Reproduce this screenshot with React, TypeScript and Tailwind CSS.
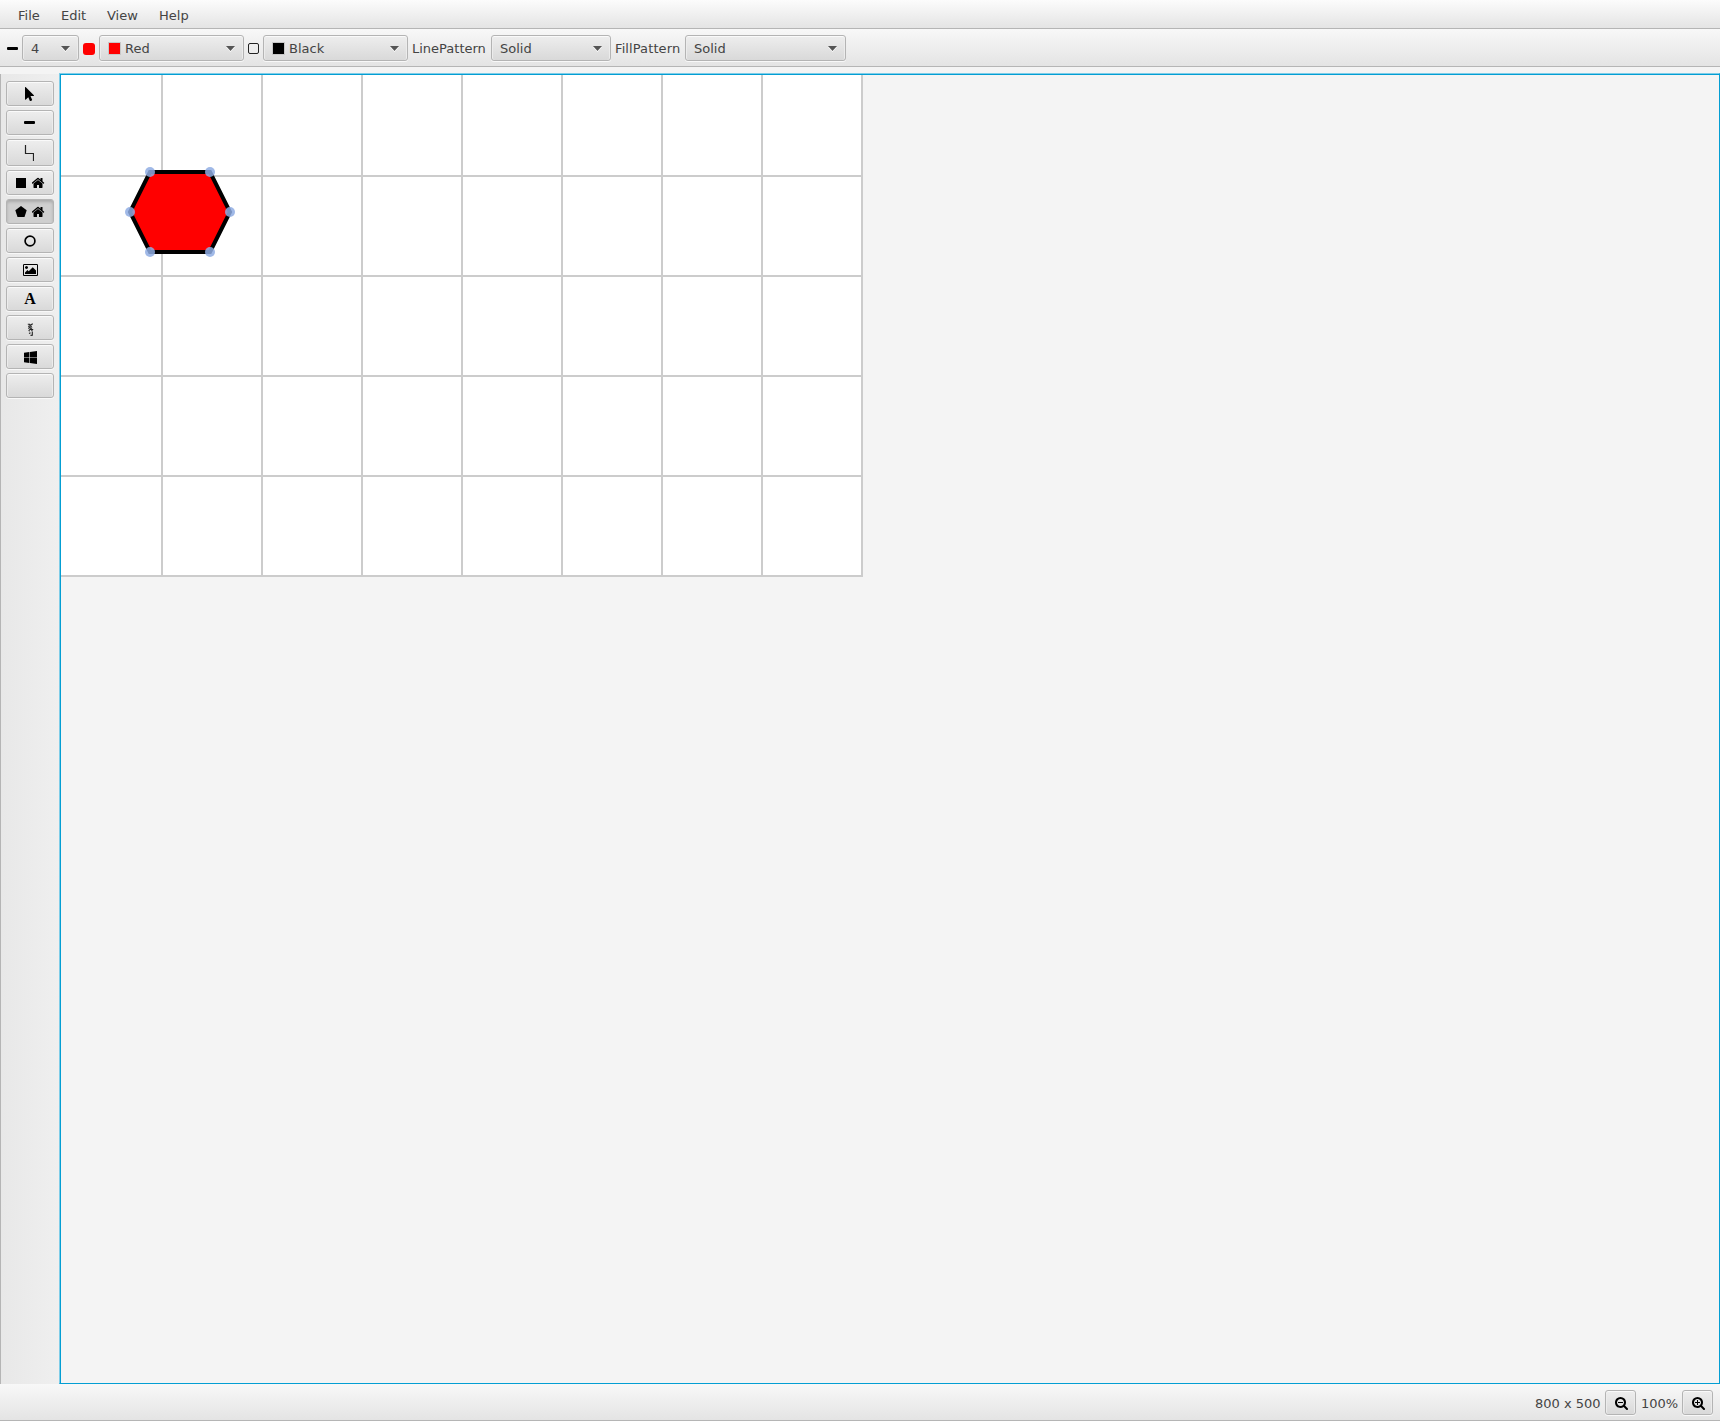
import type { ReactNode } from 'react';

const BUTTON =
  'box-border flex items-center justify-center rounded-[3px] border border-[#b4b4b4] bg-gradient-to-b from-[#eeeeee] to-[#d9d9d9] shadow-[inset_0_1px_0_#fafafa,inset_1px_0_0_#ececec,inset_-1px_0_0_#ececec,0_1px_0_#f8f8f8]';
const PRESSED =
  'box-border flex items-center justify-center rounded-[3px] border border-[#b4b4b4] bg-[#cfcfcf] shadow-[inset_0_2px_3px_#aaaaaa,0_1px_0_#f8f8f8]';

function Glyph({ box, d, className }: { box: string; d: string; className: string }) {
  return (
    <svg viewBox={box} className={className} fill="black">
      <path d={d} />
    </svg>
  );
}

const HOME =
  'M1408 992v480q0 26-19 45t-45 19h-384v-384h-256v384h-384q-26 0-45-19t-19-45v-480q0-1 .5-3t.5-3l575-474 575 474q1 2 1 6zm223-69l-62 74q-8 9-21 11h-3q-13 0-21-7l-692-577-692 577q-12 8-24 7-13-2-21-11l-62-74q-8-10-7-23.5t11-21.5l719-599q32-26 76-26t76 26l244 204v-195q0-14 9-23t23-9h192q14 0 23 9t9 23v408l219 182q10 8 11 21.5t-7 23.5z';
const PICTURE =
  'M640 576q0 80-56 136t-136 56-136-56-56-136 56-136 136-56 136 56 56 136zm1024 384v448h-1408v-192l320-320 160 160 512-512zm96-704h-1600q-13 0-22.5 9.5t-9.5 22.5v1216q0 13 9.5 22.5t22.5 9.5h1600q13 0 22.5-9.5t9.5-22.5v-1216q0-13-9.5-22.5t-22.5-9.5zm160 32v1216q0 66-47 113t-113 47h-1600q-66 0-113-47t-47-113v-1216q0-66 47-113t113-47h1600q66 0 113 47t47 113z';
const WINDOWS =
  'M746 1006v651l-682-94v-557h682zm0-743v659h-682v-565zm982 743v786l-907-125v-661h907zm0-878v794h-907v-669z';
const POINTER =
  'M1133 1043q31 30 14 69-17 40-59 40H706l201 476q10 25 0 49t-34 35l-177 75q-25 10-49 0t-35-34l-191-452-312 312q-19 19-45 19-12 0-24-5-40-17-40-59V64Q0 22 40 5 52 0 64 0q27 0 45 19z';
const LENS =
  'm128 32q0-185-131.5-316.5t-316.5-131.5-316.5 131.5-131.5 316.5 131.5 316.5 316.5 131.5 316.5-131.5 131.5-316.5zm512 832q0 53-37.5 90.5t-90.5 37.5q-54 0-90-38l-343-342q-179 124-399 124-143 0-273.5-55.5t-225-150-150-225-55.5-273.5 55.5-273.5 150-225 225-150 273.5-55.5 273.5 55.5 225 150 150 225 55.5 273.5q0 220-124 399l343 343q37 37 37 90z';
const ZOOM_OUT =
  'M1088 800v64q0 13-9.5 22.5t-22.5 9.5h-576q-13 0-22.5-9.5t-9.5-22.5v-64q0-13 9.5-22.5t22.5-9.5h576q13 0 22.5 9.5t9.5 22.5z' + LENS;
const ZOOM_IN =
  'M1088 800v64q0 13-9.5 22.5t-22.5 9.5h-224v224q0 13-9.5 22.5t-22.5 9.5h-64q-13 0-22.5-9.5t-9.5-22.5v-224h-224q-13 0-22.5-9.5t-9.5-22.5v-64q0-13 9.5-22.5t22.5-9.5h224v-224q0-13 9.5-22.5t22.5-9.5h64q13 0 22.5 9.5t9.5 22.5v224h224q13 0 22.5 9.5t9.5 22.5z' + LENS;

function Combo({ className, swatch, label }: { className: string; swatch?: string; label: string }) {
  return (
    <div className={`${BUTTON} ${className} h-[26px] shrink-0 pr-2`}>
      <div className="flex flex-1 items-center pl-2">
        {swatch && <span className={`mt-px mr-1 size-[13px] border border-[#c8c8c8] ${swatch}`} />}
        <span className="pt-0.5">{label}</span>
      </div>
      <svg viewBox="0 0 9 6" className="mt-0.5 h-[6px] w-[9px]">
        <path d="M0 1h9L4.5 6z" fill="#ffffff" />
        <path d="M0 0h9L4.5 5z" fill="#555555" />
      </svg>
    </div>
  );
}

const home = <Glyph box="64 160 1664 1376" d={HOME} className="h-[11px] w-[13px]" />;

const tools: { name: string; height: string; icon: ReactNode; active?: boolean }[] = [
  { name: 'Select', height: 'h-[25px]', icon: <Glyph box="0 0 1152 1792" d={POINTER} className="mt-px mr-0.5 h-[14px] w-[9px]" /> },
  { name: 'Line', height: 'h-[25px]', icon: <span className="mr-px h-[3px] w-[11px] rounded-[1px] bg-black" /> },
  {
    name: 'Polyline',
    height: 'h-[27px]',
    icon: (
      <svg viewBox="0 0 10 16" className="mr-0.5 h-4 w-[10px]">
        <path d="M1.5 0v8.500h8V16" fill="none" stroke="#222222" strokeWidth="1.200" />
      </svg>
    ),
  },
  {
    name: 'Rectangle',
    height: 'h-[25px]',
    icon: (
      <>
        <span className="mt-px mr-[6px] size-[10px] bg-black" />
        {home}
      </>
    ),
  },
  {
    name: 'Polygon',
    height: 'h-[25px]',
    active: true,
    icon: (
      <>
        <svg viewBox="0 0 12 11" className="mr-[5px] h-[11px] w-3">
          <path d="M6 0L11.700 4.200 9.500 11H2.500L.3 4.200z" />
        </svg>
        {home}
      </>
    ),
  },
  {
    name: 'Ellipse',
    height: 'h-[25px]',
    icon: (
      <svg viewBox="0 0 12 12" className="mt-px mr-px size-3">
        <circle cx="6" cy="6" r="4.900" fill="none" stroke="black" strokeWidth="1.700" />
      </svg>
    ),
  },
  { name: 'Image', height: 'h-[25px]', icon: <Glyph box="0 128 1920 1536" d={PICTURE} className="mt-px h-3 w-[15px]" /> },
  {
    name: 'Text',
    height: 'h-[25px]',
    icon: <span className="pt-px font-['Liberation_Serif',serif] text-[16px] leading-none font-bold text-black">A</span>,
  },
  {
    name: 'Freehand',
    height: 'h-[25px]',
    icon: (
      <svg viewBox="0 0 7 13" className="mt-[3px] h-[13px] w-[7px]" fill="none" stroke="#222222" strokeWidth="1.100">
        <path d="M.8 1.200H2.500L3 2.200 5.800.700M1 3.300H5M1.300 5.500L2.500 4.500 4.500 5 3 6.500H5.500L4.500 8M1.500 7.500L3 8M2 10.500L3.500 9.700M5.300 8.500V12.300L3.500 12.400" />
      </svg>
    ),
  },
  { name: 'Windows', height: 'h-[25px]', icon: <Glyph box="64 128 1664 1664" d={WINDOWS} className="mt-0.5 size-[13px]" /> },
  { name: 'Blank', height: 'h-[25px]', icon: null },
];

const columns = [100, 200, 300, 400, 500, 600, 700, 800];
const rows = [100, 200, 300, 400, 500];
const handles = [
  [88, 96],
  [148, 96],
  [168, 136],
  [148, 176],
  [88, 176],
  [68, 136],
];

function Drawing() {
  return (
    <svg viewBox="-1 -1 802 502" className="block h-[502px] w-[802px]">
      <rect x="-1" y="-1" width="802" height="502" fill="white" />
      <g stroke="#cccccc" strokeWidth="2">
        {columns.map((x) => (
          <line key={x} x1={x} x2={x} y1="-1" y2="501" />
        ))}
        {rows.map((y) => (
          <line key={y} x1="-1" x2="801" y1={y} y2={y} />
        ))}
      </g>
      <polygon points={handles.map((p) => p.join(',')).join(' ')} fill="#ff0000" stroke="black" strokeWidth="4" />
      {handles.map(([x, y]) => (
        <circle key={`${x}-${y}`} cx={x} cy={y} r="5" fill="#8fade3" fillOpacity=".85" />
      ))}
    </svg>
  );
}

export default function App() {
  return (
    <div className="flex h-[1421px] w-[1720px] flex-col overflow-hidden bg-[#f4f4f4] font-['DejaVu_Sans',sans-serif] text-[13px] leading-[16px] text-[#444444]">
      <nav className="flex h-[29px] shrink-0 items-center border-b border-[#b5b5b5] bg-gradient-to-b from-[#fcfcfc] to-[#e4e4e4] pt-1 pl-[18px]">
        <span className="w-[43px]">File</span>
        <span className="w-[46px]">Edit</span>
        <span className="w-[52px]">View</span>
        <span>Help</span>
      </nav>
      <header className="flex h-[38px] shrink-0 items-center border-b border-[#b5b5b5] bg-gradient-to-b from-[#f8f8f8] to-[#e4e4e4] pt-px pl-[7px]">
        <span className="mt-px mr-1 h-[3px] w-[11px] rounded-[1px] bg-black" />
        <Combo className="w-[57px]" label="4" />
        <span className="mx-1 mt-0.5 size-3 rounded-[3px] bg-[#ff0000]" />
        <Combo className="w-[145px]" label="Red" swatch="bg-[#ff0000]" />
        <span className="mx-1 mt-px size-[11px] rounded-[2px] border border-[#222222]" />
        <Combo className="w-[145px]" label="Black" swatch="bg-black" />
        <span className="w-[83px] pt-0.5 pl-1">LinePattern</span>
        <Combo className="w-[120px]" label="Solid" />
        <span className="w-[74px] pt-0.5 pl-1 tracking-[0.1px]">FillPattern</span>
        <Combo className="w-[161px]" label="Solid" />
      </header>
      <main className="flex h-[1317px] shrink-0 pt-[7px]">
        <aside className="flex w-[59px] shrink-0 flex-col gap-1 border-l border-[#b5b5b5] bg-gradient-to-r from-[#e8e8e8] to-[#efefef] pt-[7px] pl-[5px]">
          {tools.map((tool) => (
            <button key={tool.name} aria-label={tool.name} className={`${tool.active ? PRESSED : BUTTON} ${tool.height} w-[48px] shrink-0`}>
              {tool.icon}
            </button>
          ))}
        </aside>
        <section className="-mt-px flex-1 border border-[#7fcde8] border-r-[#039ed3] border-b-[#039ed3]">
          <div className="h-full overflow-hidden border-t border-l border-[#039ed3] bg-[#f4f4f4]">
            <Drawing />
          </div>
        </section>
      </main>
      <footer className="flex h-[37px] shrink-0 items-center justify-end border-b border-[#b5b5b5] bg-gradient-to-b from-[#f8f8f8] to-[#e4e4e4] pt-px pr-[7px]">
        <span className="w-[70px] pt-[3px]">800 x 500</span>
        <button aria-label="Zoom out" className={`${BUTTON} h-[25px] w-[31px]`}>
          <Glyph box="64 128 1664 1664" d={ZOOM_OUT} className="mt-0.5 ml-px size-[13px]" />
        </button>
        <span className="w-[46px] pt-[3px] pl-[5px]">100%</span>
        <button aria-label="Zoom in" className={`${BUTTON} h-[25px] w-[31px]`}>
          <Glyph box="64 128 1664 1664" d={ZOOM_IN} className="mt-0.5 ml-px size-[13px]" />
        </button>
      </footer>
    </div>
  );
}
